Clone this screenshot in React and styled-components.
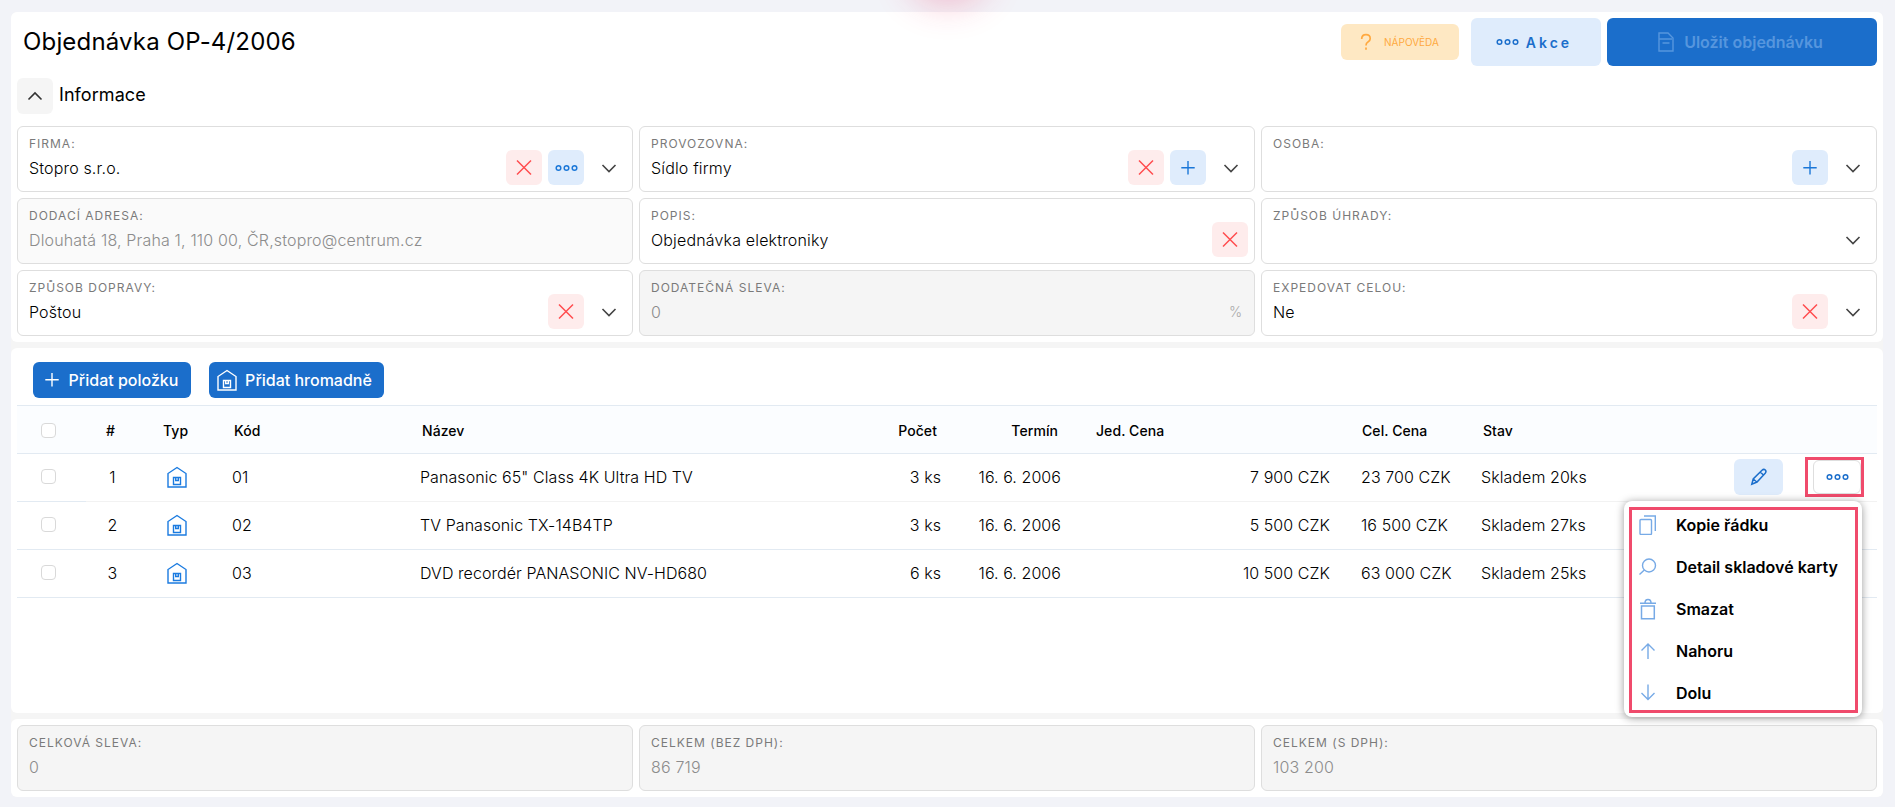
import React from 'react'
import styled, { createGlobalStyle, css } from 'styled-components'

const GlobalStyle = createGlobalStyle`
  * {
    box-sizing: border-box;
  }

  body {
    margin: 0;
    background: #f2f3f8;
    font-family: Inter, sans-serif;
    font-weight: 300;
    font-size: 16px;
    color: #000;
  }

  button {
    font-family: inherit;
    border: none;
    padding: 0;
  }
`

const Page = styled.div`
  position: relative;
  height: 807px;
  padding: 12px 12px 10px 11px;
  overflow: hidden;
`

const Glow = styled.div`
  position: absolute;
  top: -56px;
  left: 918px;
  width: 60px;
  height: 50px;
  border-radius: 50%;
  box-shadow: 0 0 38px 8px rgba(240, 40, 90, 0.33);
`

const Panels = styled.div`
  display: flex;
  flex-direction: column;
  gap: 6px;
  height: 785px;
  background: #f5f5f5;
  border-radius: 6px;
`

const Panel = styled.section`
  padding: 6px;
  background: #fff;
  border-radius: 6px;
  flex: ${p => (p.$grow ? '1' : 'none')};
`

const Header = styled.header`
  display: flex;
  align-items: center;
  height: 48px;
`

const Title = styled.h1`
  flex: 1;
  margin: 0 0 2px 6px;
  font-size: 24px;
  font-weight: 400;
  letter-spacing: 0.17px;
`

const Button = styled.button`
  display: flex;
  align-items: center;
  justify-content: center;
  border-radius: 6px;
`

const HelpButton = styled(Button)`
  gap: 8px;
  width: 118px;
  height: 36px;
  margin-right: 12px;
  padding-right: 5px;
  background: #fee8c3;
  color: #ffa940;
  font-size: 10px;
  font-weight: 400;
`

const ActionsButton = styled(Button)`
  gap: 7px;
  width: 130px;
  height: 48px;
  margin-right: 6px;
  padding-right: 4px;
  background: #dfecfc;
  color: #1b6ecb;
  font-size: 14px;
  font-weight: 600;
  letter-spacing: 3px;
`

const SaveButton = styled(Button)`
  gap: 8px;
  width: 270px;
  height: 48px;
  padding-right: 5px;
  background: #1b6ecb;
  color: #5696de;
  font-size: 16px;
  font-weight: 600;
`

const SectionTitle = styled.div`
  display: flex;
  align-items: center;
  gap: 6px;
  height: 36px;
  margin: 12px 0;
  font-size: 18px;
  line-height: 22px;
  font-weight: 400;
  letter-spacing: 0.07px;
`

const SectionName = styled.span`
  padding-bottom: 2px;
`

const CollapseButton = styled(Button)`
  width: 36px;
  height: 36px;
  background: #f5f5f5;
  color: #333;
`

const FieldGrid = styled.div`
  display: grid;
  grid-template-columns: repeat(3, 1fr);
  gap: 6px;
`

const fieldBackgrounds = {
  readonly: '#fafafa',
  disabled: '#f5f5f5'
}

const FieldBox = styled.div`
  display: flex;
  justify-content: space-between;
  align-items: flex-end;
  height: 66px;
  padding: 0 6px 6px 11px;
  border: 1px solid #dedede;
  border-radius: 6px;
  background: ${p => fieldBackgrounds[p.$state] || '#fff'};
`

const FieldText = styled.div`
  align-self: flex-start;
  padding-top: 9px;
`

const FieldLabel = styled.div`
  height: 16px;
  line-height: 16px;
  font-size: 12px;
  font-weight: 400;
  letter-spacing: 1px;
  text-transform: uppercase;
  color: #7a7a7a;
`

const FieldValue = styled.div`
  margin-top: 6px;
  line-height: 20px;
  letter-spacing: 0.16px;
  color: ${p => (p.$muted ? '#8c8c8c' : '#000')};
`

const FieldActions = styled.div`
  display: flex;
  gap: 6px;
`

const tones = {
  danger: css`
    background: #feecec;
    color: #ff4d4f;
  `,
  primary: css`
    background: #dfecfc;
    color: #1b77d8;
  `,
  plain: css`
    background: transparent;
    color: #444;
    padding-left: 2px;
  `
}

const IconButton = styled(Button)`
  width: 36px;
  height: 35px;
  ${p => tones[p.$tone]}
`

const Suffix = styled.span`
  padding: 0 6px 7px 0;
  font-size: 14px;
  line-height: 20px;
  color: #aaa;
`

const Toolbar = styled.div`
  display: flex;
  gap: 18px;
  height: 51px;
  padding: 8px 16px 0;
`

const ToolbarButton = styled(Button)`
  gap: ${p => p.$gap};
  width: ${p => p.$width};
  height: 36px;
  padding-right: 4px;
  background: #1b6ecb;
  color: #fff;
  font-size: 16px;
  font-weight: 500;
`

const Row = styled.div`
  display: grid;
  grid-template-columns: 70px 51px 87px 188px 488px 40px 120px 269px 144px 118px 1fr;
  align-items: center;
  height: 48px;
  padding-bottom: 2px;
  border-bottom: 1px solid #e2eaf2;
  letter-spacing: 0.07px;

  ${p => p.$selected && css`
    border-image: linear-gradient(to right, #e2eaf2 70px, #f2f2f2 70px) 1;
  `}
`

const HeadRow = styled(Row)`
  height: 49px;
  padding: 2px 0 0;
  border-top: 1px solid #e2eaf2;
  background: #fbfdff;
  font-size: 14px;
  font-weight: 500;
`

const Cell = styled.div`
  white-space: nowrap;
  padding-left: ${p => p.$left || 0}px;
  padding-right: ${p => p.$right || 0}px;
  text-align: ${p => p.$align || 'left'};

  svg {
    display: block;
  }
`

const Checkbox = styled.div`
  width: 15px;
  height: 15px;
  margin-left: 24px;
  border: 1px solid #d9d9d9;
  border-radius: 4px;
  background: #fff;
`

const RowActions = styled.div`
  position: relative;
  display: flex;
  justify-content: flex-end;
  gap: 22px;
  margin-top: 1px;
  padding-right: 13px;
`

const EditButton = styled(Button)`
  width: 49px;
  height: 36px;
  background: #dfecfc;
  color: #1b6ecb;
`

const MoreFrame = styled.div`
  display: flex;
  justify-content: flex-end;
  width: 59px;
  height: 40px;
  margin: -2px 0;
  border: 3px solid #f04b6c;
`

const MoreButton = styled(Button)`
  width: 48px;
  height: 34px;
  border: 1px solid #dedede;
  background: #fff;
  color: #1b6ecb;
`

const Menu = styled.div`
  position: absolute;
  top: 42px;
  right: 15px;
  width: 238px;
  height: 216px;
  padding: 6px 4px 4px 5px;
  border-radius: 8px;
  background: #fff;
  box-shadow: 0 1px 8px rgba(0, 0, 0, 0.4);
`

const MenuFrame = styled.div`
  height: 206px;
  border: 3px solid #f04b6c;
`

const MenuItem = styled.div`
  display: flex;
  align-items: center;
  gap: 18px;
  height: 42px;
  padding-left: 6px;
  font-weight: 600;
  letter-spacing: 0;
  white-space: nowrap;

  &:first-child {
    margin-top: -6px;
  }

  svg {
    color: #77aae6;
  }
`

const Icon = ({ size = 20, width = 1.4, children }) => (
  <svg
    width={size}
    height={size}
    viewBox="0 0 20 20"
    fill="none"
    stroke="currentColor"
    strokeWidth={width}
  >
    {children}
  </svg>
)

const DotsIcon = () => (
  <svg width="23" height="8" viewBox="0 0 23 8" fill="none" stroke="currentColor" strokeWidth="1.5">
    <circle cx="3.5" cy="4" r="2.3" />
    <circle cx="11.5" cy="4" r="2.3" />
    <circle cx="19.5" cy="4" r="2.3" />
  </svg>
)

const CloseIcon = () => <Icon width={1.5}><path d="M3 2.500l14 14M17 2.500L3 16.500" /></Icon>
const PlusIcon = () => <Icon><path d="M10 3v13.400M3.300 9.700h13.400" /></Icon>
const DownIcon = () => <Icon width={1.6}><path d="M3.5 7l6.5 6.5L16.5 7" /></Icon>
const UpIcon = () => <Icon width={1.6}><path d="M3.5 13.5L10 7l6.5 6.5" /></Icon>
const PencilIcon = () => (
  <Icon width={1.5}>
    <path d="M2.800 17.200l1.400-5.200 8.800-8.800q1.800-1.600 3.300-.2 1.400 1.500-.1 3.200L8 15zM4.200 12l3.600 3M11.200 5l3.500 3.300" />
  </Icon>
)
const HelpIcon = () => (
  <Icon width={1.7}><path d="M5.700 7Q5.700 2.700 10 2.700t4.200 4q0 2-2.200 3.200-2 1.300-2 3.500M10 15.500v2.200" /></Icon>
)
const DocumentIcon = () => (
  <Icon width={1.4}><path d="M3 1h9l5 5v13H3zM3 7h13M6.5 11h7" /></Icon>
)
const CopyIcon = () => (
  <Icon><rect x="2" y="4.500" width="11.500" height="15" rx="1" /><path d="M6 1h11.300v15" /></Icon>
)
const SearchIcon = () => (
  <Icon><circle cx="11" cy="8.500" r="6.500" /><path d="M6.300 13L1.500 17.500" /></Icon>
)
const TrashIcon = () => (
  <svg width="20" height="22" viewBox="0 0 20 22" fill="none" stroke="currentColor" strokeWidth="1.5">
    <path d="M3.500 8h12.800v12.800H3.500zM2 5.300h16M7 5q0-3.500 3-3.500t3 3.500" />
  </svg>
)
const ArrowUpIcon = () => <Icon><path d="M10 18V3M3.500 9.500L10 3l6.500 6.500" /></Icon>
const ArrowDownIcon = () => <Icon><path d="M10 1.500v15M3.500 10L10 16.500l6.500-6.500" /></Icon>

const WarehouseIcon = () => (
  <svg width="20" height="22" viewBox="0 0 20 22" fill="none" stroke="currentColor" strokeWidth="1.4">
    <path d="M1 21V7.500L10 1.500l9 6V21z" />
    <path d="M6.500 11.500h7v7h-7zM8.700 11.500v3h2.600v-3" />
  </svg>
)

const TypeIcon = styled.div`
  color: #1b7be0;
`

const actionIcons = {
  clear: { tone: 'danger', icon: <CloseIcon /> },
  more: { tone: 'primary', icon: <DotsIcon /> },
  add: { tone: 'primary', icon: <PlusIcon /> },
  open: { tone: 'plain', icon: <DownIcon /> }
}

const fields = [
  { label: 'Firma:', value: 'Stopro s.r.o.', actions: ['clear', 'more', 'open'] },
  { label: 'Provozovna:', value: 'Sídlo firmy', actions: ['clear', 'add', 'open'] },
  { label: 'Osoba:', actions: ['add', 'open'] },
  { label: 'Dodací adresa:', value: 'Dlouhatá 18, Praha 1, 110 00, ČR,stopro@centrum.cz', state: 'readonly' },
  { label: 'Popis:', value: 'Objednávka elektroniky', actions: ['clear'] },
  { label: 'Způsob úhrady:', actions: ['open'] },
  { label: 'Způsob dopravy:', value: 'Poštou', actions: ['clear', 'open'] },
  { label: 'Dodatečná sleva:', value: '0', state: 'disabled', suffix: '%' },
  { label: 'Expedovat celou:', value: 'Ne', actions: ['clear', 'open'] }
]

const totals = [
  { label: 'Celková sleva:', value: '0', state: 'disabled' },
  { label: 'Celkem (bez DPH):', value: '86 719', state: 'disabled' },
  { label: 'Celkem (s DPH):', value: '103 200', state: 'disabled' }
]

const items = [
  { code: '01', name: 'Panasonic 65" Class 4K Ultra HD TV', count: '3 ks', price: '7 900 CZK', total: '23 700 CZK', stock: 'Skladem 20ks' },
  { code: '02', name: 'TV Panasonic TX-14B4TP', count: '3 ks', price: '5 500 CZK', total: '16 500 CZK', stock: 'Skladem 27ks' },
  { code: '03', name: 'DVD recordér PANASONIC NV-HD680', count: '6 ks', price: '10 500 CZK', total: '63 000 CZK', stock: 'Skladem 25ks' }
]

const menuItems = [
  { label: 'Kopie řádku', icon: <CopyIcon /> },
  { label: 'Detail skladové karty', icon: <SearchIcon /> },
  { label: 'Smazat', icon: <TrashIcon /> },
  { label: 'Nahoru', icon: <ArrowUpIcon /> },
  { label: 'Dolu', icon: <ArrowDownIcon /> }
]

const Field = ({ label, value, state, suffix, actions = [] }) => {
  return <FieldBox $state={state}>
    <FieldText>
      <FieldLabel>{label}</FieldLabel>
      <FieldValue $muted={!!state}>{value}</FieldValue>
    </FieldText>
    <FieldActions>
      {suffix && <Suffix>{suffix}</Suffix>}
      {actions.map(a => (
        <IconButton key={a} $tone={actionIcons[a].tone}>{actionIcons[a].icon}</IconButton>
      ))}
    </FieldActions>
  </FieldBox>
}

const ItemMenu = () => {
  return <Menu>
    <MenuFrame>
      {menuItems.map(m => (
        <MenuItem key={m.label}>{m.icon}{m.label}</MenuItem>
      ))}
    </MenuFrame>
  </Menu>
}

const ItemRow = ({ item, index, selected }) => {
  return <Row $selected={selected}>
    <Checkbox />
    <Cell $align="center">{index}</Cell>
    <Cell $left={29}><TypeIcon><WarehouseIcon /></TypeIcon></Cell>
    <Cell $left={7}>{item.code}</Cell>
    <Cell $left={7}>{item.name}</Cell>
    <Cell $align="right">{item.count}</Cell>
    <Cell $align="right">{'16. 6. 2006'}</Cell>
    <Cell $align="right">{item.price}</Cell>
    <Cell $left={31}>{item.total}</Cell>
    <Cell $left={7}>{item.stock}</Cell>
    {selected && (
      <RowActions>
        <EditButton><PencilIcon /></EditButton>
        <MoreFrame><MoreButton><DotsIcon /></MoreButton></MoreFrame>
        <ItemMenu />
      </RowActions>
    )}
  </Row>
}

const App = () => {
  return <Page>
    <GlobalStyle />
    <Panels>
      <Panel>
        <Header>
          <Title>Objednávka OP-4/2006</Title>
          <HelpButton><HelpIcon />NÁPOVĚDA</HelpButton>
          <ActionsButton><DotsIcon />Akce</ActionsButton>
          <SaveButton><DocumentIcon />Uložit objednávku</SaveButton>
        </Header>
        <SectionTitle>
          <CollapseButton><UpIcon /></CollapseButton>
          <SectionName>Informace</SectionName>
        </SectionTitle>
        <FieldGrid>
          {fields.map(f => <Field key={f.label} {...f} />)}
        </FieldGrid>
      </Panel>
      <Panel $grow>
        <Toolbar>
          <ToolbarButton $width="158px" $gap="7px"><PlusIcon />Přidat položku</ToolbarButton>
          <ToolbarButton $width="175px" $gap="8px"><WarehouseIcon />Přidat hromadně</ToolbarButton>
        </Toolbar>
        <HeadRow>
          <Checkbox />
          <Cell $align="center" $right={4}>#</Cell>
          <Cell $left={25}>Typ</Cell>
          <Cell $left={9}>Kód</Cell>
          <Cell $left={9}>Název</Cell>
          <Cell $align="right" $right={4}><HeadCount /></Cell>
          <Cell $align="right" $right={3}>Termín</Cell>
          <Cell $left={35}>Jed. Cena</Cell>
          <Cell $left={32}>Cel. Cena</Cell>
          <Cell $left={9}>Stav</Cell>
        </HeadRow>
        {items.map((item, i) => (
          <ItemRow key={item.code} item={item} index={i + 1} selected={i === 0} />
        ))}
      </Panel>
      <Panel>
        <FieldGrid>
          {totals.map(f => <Field key={f.label} {...f} />)}
        </FieldGrid>
      </Panel>
    </Panels>
    <Glow />
  </Page>
}

// wider than its column, so it is aligned from the right edge
const CountLabel = styled.div`
  display: flex;
  justify-content: flex-end;
`

const HeadCount = () => <CountLabel>Počet</CountLabel>

export default App
